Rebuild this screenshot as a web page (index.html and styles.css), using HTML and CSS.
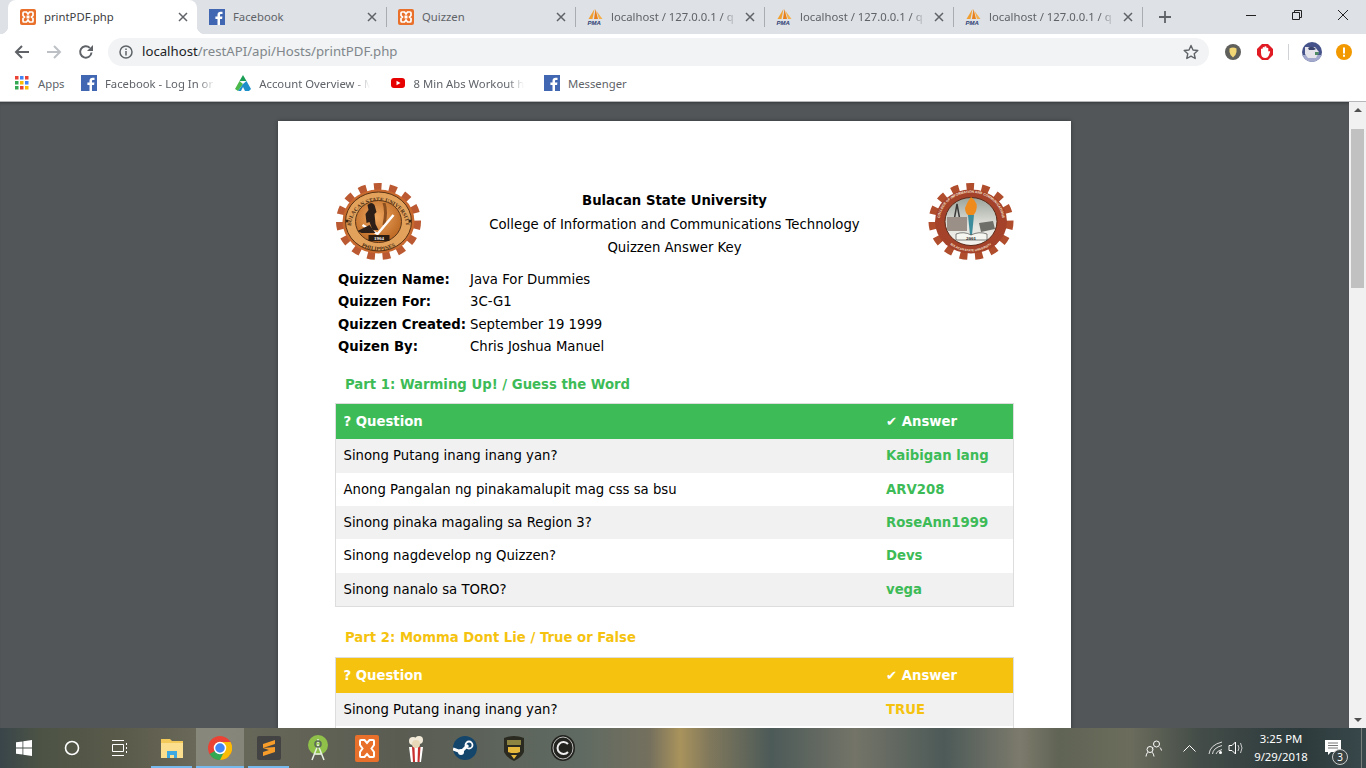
FILE: index.html
```html
<!DOCTYPE html>
<html lang="en">
<head>
  <meta charset="UTF-8">
  <meta name="viewport" content="width=device-width, initial-scale=1.0">
  <title>printPDF.php</title>
  <link rel="stylesheet" href="styles.css">
</head>
<body>
  <svg class="sprite" xmlns="http://www.w3.org/2000/svg">
    <symbol id="i-xampp" viewBox="0 0 16 16">
      <rect width="16" height="16" rx="2" fill="#e9702a"/>
      <path d="M4 3h2.500l1.500 2 1.500-2H12a1 1 0 0 1 1 1v2.500L11.500 8 13 9.500V12a1 1 0 0 1-1 1H9.500L8 11l-1.500 2H4a1 1 0 0 1-1-1V9.500L4.500 8 3 6.500V4a1 1 0 0 1 1-1z" fill="none" stroke="#fff" stroke-width="1.700"/>
      <path d="M6.500 6.500h3v3h-3z" fill="#fff"/>
    </symbol>
    <symbol id="i-fb" viewBox="0 0 16 16">
      <rect width="16" height="16" fill="#4267b2"/>
      <path d="M11 16V10h2.100l.3-2.400H11V6.100c0-.7.2-1.200 1.200-1.200h1.300V2.800c-.2 0-1-.1-1.900-.1-1.900 0-3.100 1.100-3.100 3.200v1.700H6.400V10h2.100v6z" fill="#fff"/>
    </symbol>
    <symbol id="i-pma" viewBox="0 0 16 16">
      <path d="M7.500 0 L5.500 10 L1.500 10 z" fill="#f0a030"/>
      <path d="M8.500 0 L7 10 L11 10 z" fill="#e8801c"/>
      <path d="M9.500 2 L12 10 L15.500 10 z" fill="#f4b04c"/>
      <text x="0.500" y="15.500" class="pma-text">PMA</text>
    </symbol>
    <symbol id="i-close" viewBox="0 0 10 10">
      <path d="M1 1l8 8M9 1l-8 8" stroke="#5f6368" stroke-width="1.500" fill="none"/>
    </symbol>
  </svg>

  <div class="tabstrip">
    <div class="tab tab-active">
      <svg class="fav"><use href="#i-xampp"/></svg>
      <span class="tab-title">printPDF.php</span>
      <svg class="tab-x"><use href="#i-close"/></svg>
    </div>
    <div class="tab">
      <svg class="fav"><use href="#i-fb"/></svg>
      <span class="tab-title">Facebook</span>
      <svg class="tab-x"><use href="#i-close"/></svg>
    </div>
    <div class="tab tab-sep">
      <svg class="fav"><use href="#i-xampp"/></svg>
      <span class="tab-title">Quizzen</span>
      <svg class="tab-x"><use href="#i-close"/></svg>
    </div>
    <div class="tab tab-sep">
      <svg class="fav"><use href="#i-pma"/></svg>
      <span class="tab-title tab-fade">localhost / 127.0.0.1 / q</span>
      <svg class="tab-x"><use href="#i-close"/></svg>
    </div>
    <div class="tab tab-sep">
      <svg class="fav"><use href="#i-pma"/></svg>
      <span class="tab-title tab-fade">localhost / 127.0.0.1 / q</span>
      <svg class="tab-x"><use href="#i-close"/></svg>
    </div>
    <div class="tab tab-sep">
      <svg class="fav"><use href="#i-pma"/></svg>
      <span class="tab-title tab-fade">localhost / 127.0.0.1 / q</span>
      <svg class="tab-x"><use href="#i-close"/></svg>
    </div>
    <div class="tab-new">
      <svg width="12" height="12" viewBox="0 0 12 12"><path d="M6 0v12M0 6h12" stroke="#5f6368" stroke-width="1.800"/></svg>
    </div>
    <div class="win-btns">
      <div class="win-btn"><svg width="10" height="10" viewBox="0 0 10 10"><path d="M0 5.500h10" stroke="#222"/></svg></div>
      <div class="win-btn"><svg width="10" height="10" viewBox="0 0 10 10"><path d="M.5 2.500h7v7h-7zM2.500 2.500v-2h7v7h-2" fill="none" stroke="#222"/></svg></div>
      <div class="win-btn"><svg width="10" height="10" viewBox="0 0 10 10"><path d="M0 0l10 10M10 0L0 10" stroke="#222"/></svg></div>
    </div>
  </div>

  <div class="toolbar">
    <svg class="nav-btn" viewBox="0 0 16 16"><path d="M15 8H2M8 2L2 8l6 6" fill="none" stroke="#5f6368" stroke-width="2"/></svg>
    <svg class="nav-btn" viewBox="0 0 16 16"><path d="M1 8h13M8 2l6 6-6 6" fill="none" stroke="#bdc1c6" stroke-width="2"/></svg>
    <svg class="nav-btn" viewBox="0 0 16 16"><path d="M13.500 8.500A5.700 5.700 0 1 1 11.800 3.900" fill="none" stroke="#5f6368" stroke-width="2"/><path d="M15 1v6H9z" fill="#5f6368"/></svg>
    <div class="omnibox">
      <svg class="info" width="14" height="14" viewBox="0 0 14 14"><circle cx="7" cy="7" r="6" fill="none" stroke="#5f6368" stroke-width="1.500"/><path d="M7 6v4.500M7 3.500v1.500" stroke="#5f6368" stroke-width="1.500"/></svg>
      <span class="url"><span class="url-host">localhost</span>/restAPI/api/Hosts/printPDF.php</span>
      <svg class="star" width="16" height="16" viewBox="0 0 16 16"><path d="M8 1.500l2 4.500 4.800.5-3.600 3.200 1 4.800L8 12.100 3.800 14.500l1-4.800L1.200 6.500 6 6z" fill="none" stroke="#5f6368" stroke-width="1.400" stroke-linejoin="round"/></svg>
    </div>
    <div class="ext-icons">
      <svg class="ext" viewBox="0 0 16 16"><circle cx="8" cy="8" r="8" fill="#5f5f5c"/><path d="M4.500 4.500Q8 2.500 11.500 4.500V8Q11 11.500 8 13.500 5 11.500 4.500 8z" fill="#f3d774"/></svg>
      <svg class="ext ext-stop" viewBox="0 0 16 16"><path d="M5 0h6l5 5v6l-5 5H5l-5-5V5z" fill="#e01b24"/><path d="M4 8.500V5l1-.5.700.3V3.500l1-.5.800.4V2.500l1.200-.3.800.6V4l1-.3.800.6v3.200l1-.5.900.7-1.500 4q-1 2.300-3.500 2.300-3.700-.3-4-3.500z" fill="#fff"/></svg>
      <span class="ext-sep"></span>
      <svg class="avatar" viewBox="0 0 20 20"><defs><clipPath id="av"><circle cx="10" cy="10" r="10"/></clipPath></defs><g clip-path="url(#av)"><rect width="20" height="20" fill="#46538a"/><rect y="13" width="20" height="7" fill="#a2a9cc"/><path d="M3 5h10l4 5-3 6H6l-3-4z" fill="#e4e4ea"/><path d="M6 6q4-3 8 1l-2 1-5 0z" fill="#39436e"/><path d="M13 10l4 0-1 3-3 0z" fill="#4d8a63"/></g></svg>
      <svg class="ext" viewBox="0 0 16 16"><circle cx="8" cy="8" r="8" fill="#f29900"/><path d="M8 3.500v6M8 10.800v2" stroke="#fff" stroke-width="2"/></svg>
    </div>
  </div>

  <div class="bookmarks">
    <div class="bm bm-apps">
      <svg width="14" height="14" viewBox="0 0 14 14">
        <rect width="3.500" height="3.500" fill="#ea4335"/><rect x="5" width="3.500" height="3.500" fill="#4285f4"/><rect x="10" width="3.500" height="3.500" fill="#ea4335"/>
        <rect y="5" width="3.500" height="3.500" fill="#34a853"/><rect x="5" y="5" width="3.500" height="3.500" fill="#fbbc05"/><rect x="10" y="5" width="3.500" height="3.500" fill="#4285f4"/>
        <rect y="10" width="3.500" height="3.500" fill="#34a853"/><rect x="5" y="10" width="3.500" height="3.500" fill="#ea4335"/><rect x="10" y="10" width="3.500" height="3.500" fill="#fbbc05"/>
      </svg>
      <span>Apps</span>
    </div>
    <div class="bm">
      <svg class="fav"><use href="#i-fb"/></svg>
      <span class="bm-title">Facebook - Log In or</span>
    </div>
    <div class="bm">
      <svg class="fav" viewBox="0 0 16 16"><path d="M8 0l3.500 6h-7z" fill="#1a9e56"/><path d="M4.500 6L0 14l3 2 5-7z" fill="#4bb84a"/><path d="M11.500 6L16 14l-2 2H3l5-7z" fill="#1d8fc9"/><path d="M6 16l2-4 2 4z" fill="#fff"/></svg>
      <span class="bm-title">Account Overview - M</span>
    </div>
    <div class="bm">
      <svg class="fav" viewBox="0 0 16 16"><rect x="1" y="3" width="14" height="10" rx="3" fill="#e60000"/><path d="M6.500 5.800l4 2.200-4 2.200z" fill="#fff"/></svg>
      <span class="bm-title">8 Min Abs Workout h</span>
    </div>
    <div class="bm">
      <svg class="fav"><use href="#i-fb"/></svg>
      <span>Messenger</span>
    </div>
  </div>

  <div class="viewer">
    <div class="pdf-area">
      <div class="page">
        <div class="doc-head">
          <svg class="logo" viewBox="-0.500 0 86 77" preserveAspectRatio="none">
            <defs>
              <radialGradient id="bsu-core" cx="45%" cy="40%" r="65%"><stop offset="0" stop-color="#f0a860"/><stop offset="1" stop-color="#b8641f"/></radialGradient>
              <path id="bsu-arc" d="M17 52A27.500 25.500 0 1 1 69 52"/>
              <path id="bsu-arc2" d="M25 62.500A32 29 0 0 0 61 62.500"/>
            </defs>
            <ellipse cx="43" cy="38.500" rx="38" ry="34" fill="none" stroke="#bb5a32" stroke-width="9" stroke-dasharray="7.500 7.500"/>
            <ellipse cx="43" cy="38.500" rx="36" ry="32" fill="#c8692f"/>
            <ellipse cx="43" cy="38.500" rx="33" ry="29.500" fill="#e2a25c" stroke="#5a3416" stroke-width="1"/>
            <text class="logo-ring"><textPath href="#bsu-arc" startOffset="50%">BULACAN STATE UNIVERSITY</textPath></text>
            <text class="logo-ring"><textPath href="#bsu-arc2" startOffset="50%">PHILIPPINES</textPath></text>
            <circle cx="11.500" cy="38" r="1.500" fill="#3a2412"/>
            <circle cx="74.500" cy="38" r="1.500" fill="#3a2412"/>
            <ellipse cx="43" cy="38.500" rx="23" ry="21" fill="url(#bsu-core)" stroke="#5a3416"/>
            <path d="M32 22q4-4 7 0l2 7-2 2 1 10 3 6-6 0-3-8-3 1-1-9 3-4z" fill="#2e2018"/>
            <path d="M47 20q3 8 0 22l3 0q3-14 0-22z" fill="#8c4f20"/>
            <path d="M27 42l15 9 16-19" fill="none" stroke="#fff" stroke-width="2.500"/>
            <path d="M22 48l12-6 6 8-14 0z" fill="#2e2018"/>
            <rect x="33" y="52" width="21" height="6" fill="#2a1c10"/>
            <text x="43.500" y="57" class="logo-year">1904</text>
          </svg>
          <div class="head-text">
            <b>Bulacan State University</b><br>
            College of Information and Communications Technology<br>
            Quizzen Answer Key
          </div>
          <svg class="logo" viewBox="0 0 86 77" preserveAspectRatio="none">
            <defs>
              <linearGradient id="cict-core" x1="0" y1="0" x2="0" y2="1"><stop offset="0" stop-color="#9aa39a"/><stop offset=".6" stop-color="#e4e4de"/><stop offset="1" stop-color="#f4f2ec"/></linearGradient>
              <path id="cict-arc" d="M13 47A31.500 28.500 0 1 1 73 47"/>
              <path id="cict-arc2" d="M23 62A32 29 0 0 0 63 62"/>
            </defs>
            <ellipse cx="43" cy="38.500" rx="38" ry="34" fill="none" stroke="#b04d2c" stroke-width="9" stroke-dasharray="7.500 7.500"/>
            <ellipse cx="43" cy="38.500" rx="36" ry="32" fill="#a5422a"/>
            <text class="logo-ring2"><textPath href="#cict-arc" startOffset="50%">COLLEGE OF INFORMATION AND COMMUNICATIONS</textPath></text>
            <text class="logo-ring3"><textPath href="#cict-arc2" startOffset="50%">BULACAN STATE UNIVERSITY</textPath></text>
            <ellipse cx="43" cy="38.500" rx="26" ry="24" fill="url(#cict-core)" stroke="#5a2a18"/>
            <path d="M29 21l-4 22h8z" fill="none" stroke="#3a3a3a" stroke-width="1.500"/>
            <rect x="19" y="34" width="20" height="14" fill="#9a9088"/>
            <path d="M51 40l14-2 2 8-14 3z" fill="#6f6f6a"/>
            <path d="M43 14q8 6 5 14-2 5-5 5-6-1-6-8 2-6 6-11z" fill="#ef8a1c"/>
            <path d="M40 32h6l-2 20h-2z" fill="#3c8c9c"/>
            <path d="M28 51q8-3 15 1 8-4 16-1v6H28z" fill="#f6f6f0" stroke="#333" stroke-width=".6"/>
            <text x="43" y="56.500" class="logo-date">2001</text>
          </svg>
        </div>

        <div class="doc-info">
          <b>Quizzen Name:</b><span>Java For Dummies</span>
          <b>Quizzen For:</b><span>3C-G1</span>
          <b>Quizzen Created:</b><span>September 19 1999</span>
          <b>Quizen By:</b><span>Chris Joshua Manuel</span>
        </div>

        <h4 class="part-title green-text">Part 1: Warming Up! / Guess the Word</h4>
        <table class="quiz-table green-table">
          <thead>
            <tr><th class="col-q">? Question</th><th>✔ Answer</th></tr>
          </thead>
          <tbody>
            <tr><td>Sinong Putang inang inang yan?</td><td class="ans">Kaibigan lang</td></tr>
            <tr><td>Anong Pangalan ng pinakamalupit mag css sa bsu</td><td class="ans">ARV208</td></tr>
            <tr><td>Sinong pinaka magaling sa Region 3?</td><td class="ans">RoseAnn1999</td></tr>
            <tr><td>Sinong nagdevelop ng Quizzen?</td><td class="ans">Devs</td></tr>
            <tr><td>Sinong nanalo sa TORO?</td><td class="ans">vega</td></tr>
          </tbody>
        </table>

        <h4 class="part-title yellow-text">Part 2: Momma Dont Lie / True or False</h4>
        <table class="quiz-table yellow-table">
          <thead>
            <tr><th class="col-q">? Question</th><th>✔ Answer</th></tr>
          </thead>
          <tbody>
            <tr><td>Sinong Putang inang inang yan?</td><td class="ans">TRUE</td></tr>
            <tr><td>&nbsp;</td><td class="ans">&nbsp;</td></tr>
          </tbody>
        </table>
      </div>
    </div>
    <div class="scrollbar">
      <span class="arrow-up"></span>
      <span class="thumb"></span>
      <span class="arrow-down"></span>
    </div>
  </div>

  <div class="taskbar">
    <div class="task-icon task-sys">
      <svg width="16" height="16" viewBox="0 0 16 16"><path d="M0 2.300l6.500-.9v6.200H0zM7.300 1.300L16 0v7.600H7.300zM0 8.400h6.500v6.200L0 13.700zM7.300 8.400H16V16l-8.700-1.200z" fill="#fff"/></svg>
    </div>
    <div class="task-icon task-sys">
      <svg width="16" height="16" viewBox="0 0 16 16"><circle cx="8" cy="8" r="6.500" fill="none" stroke="#fff" stroke-width="1.600"/></svg>
    </div>
    <div class="task-icon task-sys">
      <svg width="18" height="16" viewBox="0 0 18 16"><path d="M1 .5h12M1 15.500h12M1.500 4.500h11v7h-11zM15.500 3v2M15.500 7v2M15.500 11v2" fill="none" stroke="#fff"/></svg>
    </div>
    <div class="task-icon task-run task-first">
      <svg width="22" height="20" viewBox="0 0 22 20"><path d="M0 1h9l2 2h11v17H0z" fill="#f3c95a"/><rect y="5" width="22" height="15" fill="#fbdf8e"/><path d="M6 20v-7h10v7h-3v-3H9v3z" fill="#3da9e0"/></svg>
    </div>
    <div class="task-icon task-run task-on">
      <svg width="24" height="24" viewBox="0 0 24 24"><circle cx="12" cy="12" r="12" fill="#ea4335"/><path d="M12 12L1.600 18A12 12 0 0 0 12 24c1 0 2-.1 2.500-.3L18 12z" fill="#34a853"/><path d="M12 6h10.500A12 12 0 0 1 12 24l6-12z" fill="#fbbc05"/><circle cx="12" cy="12" r="5.500" fill="#4285f4" stroke="#fff" stroke-width="1.500"/></svg>
    </div>
    <div class="task-icon task-run">
      <svg width="24" height="24" viewBox="0 0 24 24"><rect width="24" height="24" rx="2" fill="#434343"/><path d="M18 4v4L6 12V8zM6 12l12-1v5L6 20v-4l6-2z" fill="#f89d29"/></svg>
    </div>
    <div class="task-icon">
      <svg width="22" height="26" viewBox="0 0 22 26"><circle cx="11" cy="10" r="10" fill="#8fc04a"/><path d="M11 4v4M5 25l6-15 6 15M7 19h8" fill="none" stroke="#e8f0e4" stroke-width="1.500"/><circle cx="11" cy="9" r="3" fill="none" stroke="#5a6a58" stroke-width="1.500"/></svg>
    </div>
    <div class="task-icon">
      <svg width="24" height="27"><rect width="24" height="27" rx="2" fill="#e9702a"/><path d="M6 5h3.500L12 8l2.500-3H18a1 1 0 0 1 1 1v4l-2.500 3.500L19 17v4a1 1 0 0 1-1 1h-3.500L12 19l-2.500 3H6a1 1 0 0 1-1-1v-4l2.500-3.500L5 10V6a1 1 0 0 1 1-1z" fill="none" stroke="#fff" stroke-width="2"/></svg>
    </div>
    <div class="task-icon">
      <svg width="18" height="27" viewBox="0 0 18 27"><path d="M2 12h14l-2 15H4z" fill="#fff"/><path d="M5 12l1 15h2l-.5-15zM11 12l-.5 15h2l1-15z" fill="#c8312e"/><circle cx="6" cy="6" r="4" fill="#f2ead8"/><circle cx="12" cy="5" r="4" fill="#f2ead8"/><circle cx="9" cy="9" r="4" fill="#e8d8b8"/></svg>
    </div>
    <div class="task-icon">
      <svg width="24" height="24" viewBox="0 0 24 24"><circle cx="12" cy="12" r="12" fill="#14456b"/><path d="M0 13l8 3 7-7" fill="none" stroke="#fff" stroke-width="3"/><circle cx="16" cy="9" r="3.500" fill="none" stroke="#fff" stroke-width="1.800"/><circle cx="8" cy="16" r="3" fill="#fff"/></svg>
    </div>
    <div class="task-icon">
      <svg width="20" height="25" viewBox="0 0 20 25"><path d="M0 2q10-4 20 0v14q-3 6-10 9-7-3-10-9z" fill="#2b2a20"/><path d="M3 4h14v5H3z" fill="#8c8440"/><path d="M4 11h12v5l-3 1H7l-3-1z" fill="#e6b83c"/><path d="M7 19h6l-3 4z" fill="#e6b83c"/></svg>
    </div>
    <div class="task-icon">
      <svg width="24" height="26" viewBox="0 0 24 26"><ellipse cx="12" cy="13" rx="12" ry="13" fill="#23231f"/><ellipse cx="12" cy="13" rx="10" ry="11" fill="none" stroke="#bbb"/><path d="M17 9a6 6 0 1 0 0 8" fill="none" stroke="#eee" stroke-width="2"/></svg>
    </div>

    <div class="tray">
      <svg width="17" height="17" viewBox="0 0 17 17"><circle cx="11.500" cy="4" r="3" fill="none" stroke="#fff"/><path d="M8 7.500q-.5 1-.8 2M15 7.500q1 1 1.500 3" fill="none" stroke="#fff"/><circle cx="5" cy="9.500" r="3" fill="none" stroke="#fff"/><path d="M1 16.500q.3-2.500 1.700-4.200M9 16.500q-.3-2.500-1.700-4.200" fill="none" stroke="#fff"/></svg>
      <svg class="tray-caret" width="13" height="7" viewBox="0 0 13 7"><path d="M.5 6.500l6-6 6 6" fill="none" stroke="#fff"/></svg>
      <svg class="tray-wifi" width="15" height="14" viewBox="0 0 15 14"><path d="M1 13Q2 4 14 1M4.500 13Q5 7 14 4.500M8 13Q8.500 10 14 8.500" fill="none" stroke="#ddd"/><circle cx="12.500" cy="11.500" r="1.500" fill="#fff"/></svg>
      <svg class="tray-vol" width="16" height="14" viewBox="0 0 16 14"><path d="M1 4.500h3l3.500-3.500v12L4 9.500H1z" fill="none" stroke="#fff"/><path d="M10 4q2 3 0 6M12.500 2q3 5 0 10" fill="none" stroke="#ccc"/></svg>
      <div class="clock"><span>3:25 PM</span><span>9/29/2018</span></div>
      <div class="notif">
        <svg width="16" height="15" viewBox="0 0 16 15"><path d="M0 0h16v12H6l-3 3v-3H0z" fill="#fff"/><path d="M3 3h10M3 5.500h10M3 8h10" stroke="#777"/></svg>
        <span class="notif-badge">3</span>
      </div>
      <span class="show-desktop"></span>
    </div>
  </div>
</body>
</html>
```

FILE: styles.css
```css
* {
  box-sizing: border-box;
}
html, body {
  margin: 0;
  height: 768px;
  overflow: hidden;
}
body {
  display: flex;
  flex-direction: column;
  font-family: "Noto Sans", sans-serif;
  font-size: 11.300px;
  color: #5f6368;
  background-color: #525659;
}
.sprite {
  display: none;
}
.fav {
  width: 16px;
  height: 16px;
  flex: none;
}
.pma-text {
  font-family: "Liberation Sans", sans-serif;
  font-size: 6px;
  font-weight: bold;
  font-style: italic;
  fill: #2c3e74;
}

/* tabs */
.tabstrip {
  display: flex;
  height: 34px;
  flex: none;
  padding-left: 8px;
  background-color: #dee1e6;
}
.tab {
  position: relative;
  display: flex;
  align-items: center;
  gap: 8px;
  width: 189px;
  padding: 0 9px 0 12px;
  flex: none;
}
.tab-active {
  background-color: #fff;
  border-radius: 8px 8px 0 0;
  color: #3c4043;
}
.tab-active::before, .tab-active::after {
  content: "";
  position: absolute;
  bottom: 0;
  width: 8px;
  height: 8px;
}
.tab-active::before {
  left: -8px;
  background: radial-gradient(circle at 0 0, #dee1e6 8px, #fff 8.500px);
}
.tab-active::after {
  right: -8px;
  background: radial-gradient(circle at 100% 0, #dee1e6 8px, #fff 8.500px);
}
.tab-sep::before, .tab-new::before {
  content: "";
  position: absolute;
  left: 0;
  top: 7px;
  height: 20px;
  width: 1px;
  background-color: #a9adb2;
}
.tab-title {
  flex: 1;
  min-width: 0;
  margin-bottom: 2px;
  white-space: nowrap;
}
.tab-fade {
  -webkit-mask-image: linear-gradient(to right, #000 88%, transparent);
  mask-image: linear-gradient(to right, #000 88%, transparent);
}
.tab-x {
  width: 10px;
  height: 10px;
  flex: none;
}
.tab-new {
  position: relative;
  display: flex;
  align-items: center;
  justify-content: center;
  width: 46px;
  flex: none;
}
.win-btns {
  display: flex;
  margin-left: auto;
}
.win-btn {
  display: flex;
  justify-content: center;
  width: 46px;
  padding-top: 10px;
}

/* address bar */
.toolbar {
  display: flex;
  align-items: center;
  height: 34px;
  flex: none;
  padding: 2px 0 0 14px;
  background-color: #fff;
}
.nav-btn {
  width: 16px;
  height: 16px;
  margin-right: 16px;
  flex: none;
}
.omnibox {
  display: flex;
  align-items: center;
  width: 1101px;
  height: 28px;
  margin-left: -2px;
  padding: 0 10px 0 11px;
  border-radius: 14px;
  background-color: #f1f3f4;
  flex: none;
}
.info {
  flex: none;
}
.url {
  margin: 0 0 2px 9px;
  font-size: 13.200px;
  color: #80868b;
  white-space: nowrap;
}
.url-host {
  color: #202124;
}
.star {
  margin-left: auto;
}
.ext-icons {
  display: flex;
  align-items: center;
  padding-left: 16px;
}
.ext {
  width: 16px;
  height: 16px;
  flex: none;
}
.ext-stop {
  margin-left: 16px;
}
.ext-sep {
  width: 1px;
  height: 16px;
  margin: 0 13px 0 15px;
  background-color: #d0d2d5;
}
.avatar {
  width: 20px;
  height: 20px;
  margin-right: 14px;
  flex: none;
}

/* bookmarks */
.bookmarks {
  display: flex;
  align-items: center;
  height: 34px;
  flex: none;
  padding: 0 0 3px 15px;
  background-color: #fff;
  border-bottom: 1px solid #b5b7ba;
}
.bm {
  display: flex;
  align-items: center;
  gap: 8px;
  margin-right: 20px;
  white-space: nowrap;
}
.bm-apps {
  gap: 9px;
  width: 66px;
  margin-right: 0;
}
.bm-title {
  width: 110.300px;
  -webkit-mask-image: linear-gradient(to right, #000 85%, transparent);
  mask-image: linear-gradient(to right, #000 85%, transparent);
}

/* pdf viewer */
.viewer {
  display: flex;
  flex: 1;
  min-height: 0;
}
.pdf-area {
  flex: 1;
  display: flex;
  justify-content: center;
  padding-top: 19px;
  overflow: hidden;
  background-color: #525659;
  box-shadow: inset 0 3px 3px -2px rgba(0,0,0,.35);
}
.page {
  width: 793px;
  height: 1100px;
  padding: 62px 57px 0;
  flex: none;
  background-color: #fff;
  box-shadow: 0 0 4px rgba(0,0,0,.35);
  font-family: "DejaVu Sans", sans-serif;
  font-size: 13.250px;
  color: #000;
}
.doc-head {
  display: flex;
  justify-content: space-between;
  align-items: center;
}
.logo {
  width: 86px;
  height: 77px;
  flex: none;
}
.logo-ring {
  font-family: "Liberation Serif", serif;
  font-size: 5.500px;
  font-weight: bold;
  fill: #4a2a10;
  text-anchor: middle;
}
.logo-ring2, .logo-ring3 {
  font-family: "Liberation Sans", sans-serif;
  font-size: 3.400px;
  font-weight: bold;
  fill: #f6e8d8;
  text-anchor: middle;
}
.logo-ring3 {
  font-size: 3px;
}
.logo-year {
  font-family: "Liberation Serif", serif;
  font-size: 5px;
  font-weight: bold;
  fill: #fff;
  text-anchor: middle;
}
.logo-date {
  font-family: "Liberation Serif", serif;
  font-size: 5px;
  font-weight: bold;
  fill: #222;
  text-anchor: middle;
}
.head-text {
  padding-top: 6px;
  text-align: center;
  line-height: 23.400px;
}
.doc-info {
  display: grid;
  grid-template-columns: 132px 1fr;
  margin-top: 9px;
  padding-left: 3px;
  line-height: 22.400px;
}
.part-title {
  margin: 0;
  padding-left: 10px;
  font-size: 13.250px;
  line-height: 22px;
}
.doc-info + .part-title {
  margin-top: 15.500px;
}
.quiz-table {
  width: 100%;
  margin-top: 7px;
  border-collapse: collapse;
  border: 1px solid #ddd;
  table-layout: fixed;
}
.yellow-table {
  margin-top: 7.600px;
}
.quiz-table + .part-title {
  margin-top: 20px;
}
.quiz-table th, .quiz-table td {
  padding: 8px 8px 8px 7.500px;
  text-align: left;
  line-height: 17.300px;
}
.quiz-table th {
  color: #fff;
  padding-top: 9px;
  padding-bottom: 9px;
}
.col-q {
  width: 543px;
}
.quiz-table tbody tr:nth-child(odd) {
  background-color: #f1f1f1;
}
.ans {
  font-weight: bold;
}
.green-text, .green-table .ans {
  color: #3dbb57;
}
.yellow-text, .yellow-table .ans {
  color: #f5c30f;
}
.green-table thead tr {
  background-color: #3dbb57;
}
.yellow-table thead tr {
  background-color: #f5c30f;
}

/* scrollbar */
.scrollbar {
  position: relative;
  display: flex;
  flex-direction: column;
  align-items: center;
  width: 17px;
  flex: none;
  background-color: #f1f1f1;
}
.arrow-up {
  margin-top: 6px;
  border: 4px solid transparent;
  border-top: 0;
  border-bottom: 4px solid #505050;
}
.thumb {
  width: 13px;
  height: 159px;
  margin-top: 17px;
  background-color: #c1c1c1;
}
.arrow-down {
  margin-top: auto;
  margin-bottom: 6px;
  border: 4px solid transparent;
  border-bottom: 0;
  border-top: 4px solid #505050;
}

/* windows taskbar */
.taskbar {
  display: flex;
  align-items: center;
  height: 40px;
  flex: none;
  background: linear-gradient(to right, #39454a 0, #4c5345 40px, #5a5a4a 120px, #6b6a5a 200px, #5a5c52 400px, #5f6a62 580px, #75705e 650px, #a9935c 680px, #80785c 710px, #4c5a58 771px, #747468 855px, #4d5a58 944px, #7c7a6c 1020px, #606454 1059px, #6b6c5c 1130px, #434c48 1200px, #2c3a3c 1300px, #39484a 1366px);
  font-family: "Noto Sans", sans-serif;
  color: #fff;
}
.task-icon {
  position: relative;
  display: flex;
  align-items: center;
  justify-content: center;
  width: 49px;
  height: 40px;
  flex: none;
}
.task-sys {
  width: 48px;
}
.task-first {
  margin-left: 3px;
}
.task-run::after {
  content: "";
  position: absolute;
  left: 4px;
  right: 4px;
  bottom: 0;
  height: 2px;
  background-color: #76b9ed;
}
.task-on {
  width: 48px;
  background-color: rgba(255,255,255,.2);
}
.task-on::after {
  left: 0;
  right: 0;
}
.tray {
  display: flex;
  align-items: center;
  margin-left: auto;
  height: 40px;
}
.tray-caret {
  margin-left: 21px;
}
.tray-wifi {
  margin-left: 12px;
}
.tray-vol {
  margin-left: 5.500px;
}
.clock {
  display: flex;
  flex-direction: column;
  align-items: center;
  width: 64px;
  margin-left: 5px;
  font-size: 11.300px;
  line-height: 18px;
}
.notif {
  position: relative;
  display: flex;
  width: 48px;
  justify-content: center;
  padding: 0 8px 2px 0;
}
.notif-badge {
  position: absolute;
  left: 19px;
  top: 9px;
  width: 16px;
  height: 16px;
  border: 1px solid #ccc;
  border-radius: 50%;
  background-color: #3a4444;
  font-size: 10px;
  line-height: 14px;
  text-align: center;
}
.show-desktop {
  width: 5px;
  height: 40px;
  border-left: 1px solid #7a7f7c;
}
```
